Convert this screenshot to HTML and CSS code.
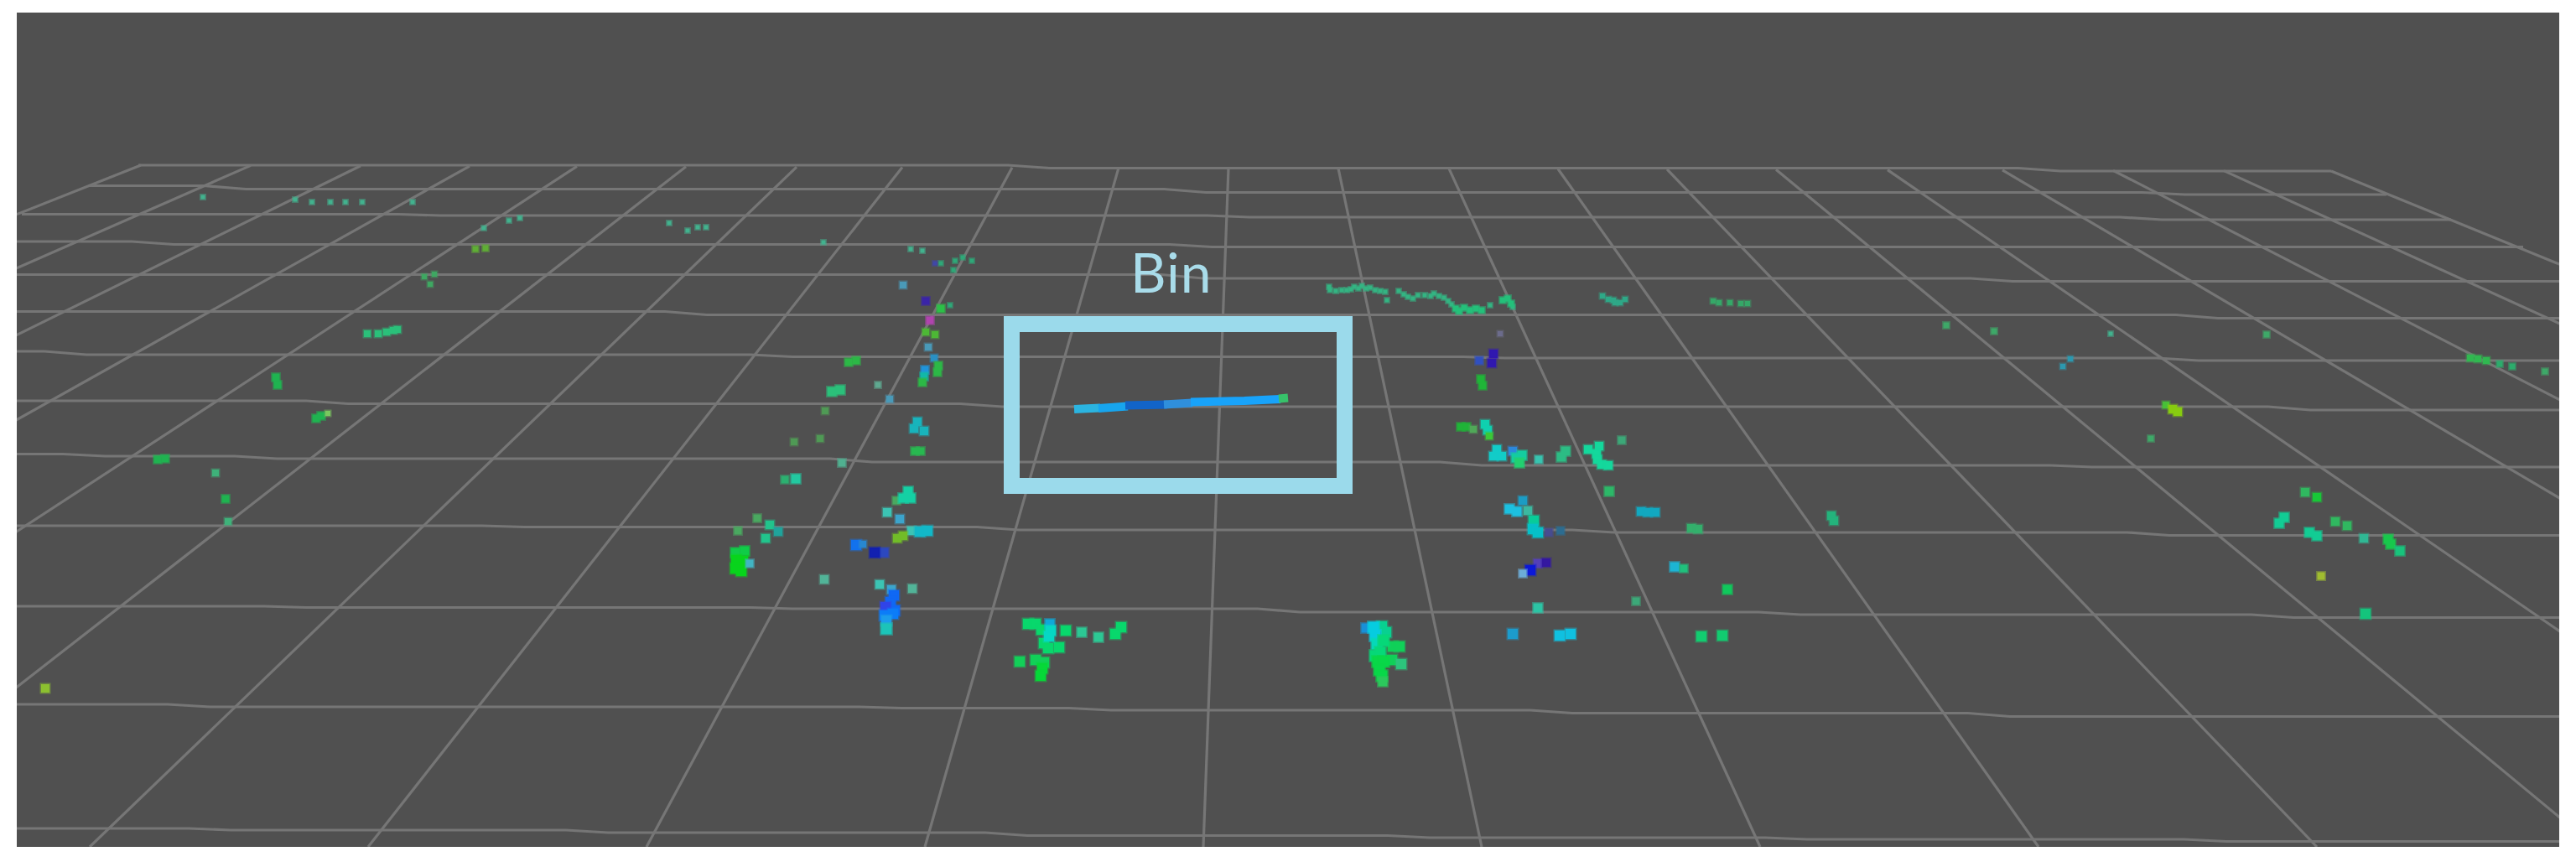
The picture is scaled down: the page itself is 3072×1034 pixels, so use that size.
FILE: index.html
```html
<!DOCTYPE html>
<html lang="en">
<head>
  <meta charset="UTF-8" />
  <meta name="viewport" content="width=device-width, initial-scale=1.0"/>
  <title>Laser Scan View</title>
  <link rel="stylesheet" href="styles.css">
</head>
<body>
  <div class="viewer">
    <svg class="scene" viewBox="20 15 3032 995">
      <g id="grid" class="grid"></g>
      <g id="points" class="points"></g>
      <g class="target">
        <path stroke="#2bb4e0" d="M1281 488 L1312 486.5"/>
        <path stroke="#17a5ee" d="M1310 487 L1345 484.5"/>
        <path stroke="#1264c8" d="M1342 483.5 L1392 482.5"/>
        <path stroke="#2f8fdc" d="M1388 482.5 L1422 480.5"/>
        <path stroke="#18a3fa" d="M1420 479.5 L1484 478 L1527 476"/>
        <path stroke="#37c26a" d="M1525 475.5 L1536 474.5"/>
      </g>
    </svg>
    <div class="label">Bin</div>
    <div class="box"></div>
  </div>
  <script src="script.js"></script>
</body>
</html>
```
FILE: styles.css
```css
* {
  margin: 0;
  padding: 0;
  box-sizing: border-box;
}

body {
  background: #fff;
  padding: 15px 20px 24px;
  font-family: Lato, sans-serif;
  overflow: hidden;
}

.viewer {
  position: relative;
  width: 3032px;
  height: 995px;
  background: #505050;
  overflow: hidden;
}

.scene {
  display: block;
  width: 100%;
  height: 100%;
}

.grid {
  fill: none;
  stroke: #767676;
  stroke-width: 3.2;
}

.points rect {
  stroke-width: 3;
  stroke-opacity: 0.45;
}

.target {
  fill: none;
  stroke-width: 10;
}

/* annotation on top of the scan */
.label {
  position: absolute;
  left: 1328px;
  top: 269px;
  font-size: 66px;
  line-height: 80px;
  letter-spacing: 1px;
  color: #a9dcea;
}

.box {
  position: absolute;
  left: 1177px;
  top: 362px;
  width: 416px;
  height: 212px;
  border: 19px solid #9bdaeb;
}
```
FILE: script.js
```js
const svgNS = "http://www.w3.org/2000/svg";
const grid = document.getElementById("grid");
const points = document.getElementById("points");

// cross lines: start x, then y / end x pairs
const rows = [
  [165, 197, 1227, 200.5, 2432, 204, 2780],
  [105, 221.5, 268, 225.5, 1413, 229.5, 2580, 232, 2846],
  [26, 255.5, 500, 257, 1465, 259, 2553, 262, 2923],
  [20, 288, 182, 291.5, 1420, 294.5, 3009],
  [20, 327.5, 1410, 332, 2375, 335.5, 3052],
  [20, 371.5, 818, 375.5, 2620, 379.5, 3052],
  [20, 419, 78, 423, 920, 425.5, 1770, 427, 2597, 430, 3052],
  [20, 478, 390, 481.5, 1170, 485, 2730, 489, 3052],
  [20, 541.5, 100, 544, 305, 547, 1015, 551, 1742, 555, 2470, 557, 3052],
  [20, 627, 600, 628.5, 1190, 632, 1900, 635, 2562, 638.5, 3052],
  [20, 723, 340, 724.5, 920, 726, 1525, 730, 2122, 733, 2710, 736.5, 3052],
  [20, 840, 225, 843, 1050, 844.5, 1300, 847, 1850, 850.5, 2372, 854.5, 3052],
  [20, 988, 250, 990, 700, 993, 1200, 996.5, 1680, 999, 2130, 1001, 2630, 1003.5, 3052]
];

// far end of the depth lines, left to right
const topX = [168, 299, 430, 560, 688, 818, 950, 1076, 1207, 1334, 1465,
  1596, 1728, 1858, 1988, 2118, 2251, 2388, 2520, 2652, 2780];

function addPath(d) {
  const path = document.createElementNS(svgNS, "path");
  path.setAttribute("d", d);
  grid.appendChild(path);
}

rows.forEach(row => {
  let d = `M${row[0]} ${row[1]}`;
  for (let i = 1; i < row.length; i += 2) {
    const last = row[i + 2] === undefined;
    d += ` L${row[i + 1] - (last ? 0 : 25)} ${row[i]}`;
    if (!last) d += ` L${row[i + 1] + 25} ${row[i + 2]}`;
  }
  addPath(d);
});

topX.forEach((x, i) => {
  const y = 197 + i * 0.35;
  addPath(`M${x} ${y} L${1435 + (i - 10) * 332} 1010`);
});

// [colour, size, x, y, x, y, ...]
const clouds = [
  ["#42b28e", 5, 242, 235, 352, 238, 372, 241, 394, 241, 412, 241, 432, 241, 492, 241,
    577, 272, 607, 263, 620, 260, 798, 266, 820, 275, 832, 271, 842, 271, 982, 289,
    1086, 297, 1100, 299, 2517, 398],
  ["#2fa878", 5, 1122, 314, 1139, 311, 1148, 307, 1159, 311, 1137, 322, 1133, 364],
  ["#5fae35", 7, 567, 297, 579, 296],
  ["#3fa862", 6, 506, 330, 518, 327, 513, 339],
  ["#2bc07a", 8, 438, 398, 451, 398, 461, 396, 469, 394, 474, 393],
  ["#1fb350", 9, 329, 450, 331, 459, 377, 499, 383, 496, 188, 548, 197, 547, 269, 595],
  ["#79c860", 6, 391, 493],
  ["#3fb27a", 8, 257, 564, 272, 622],
  ["#8cc030", 10, 54, 821],

  // left cluster
  ["#4a9ab8", 8, 1077, 340, 1107, 414, 1061, 476],
  ["#3a24a8", 9, 1104, 359],
  ["#4048a8", 5, 1115, 314],
  ["#b044ae", 9, 1109, 382],
  ["#2cc048", 9, 1122, 368],
  ["#4db835", 8, 1104, 396, 1115, 399],
  ["#2a90c4", 8, 1114, 427],
  ["#1f94da", 9, 1103, 441],
  ["#12b8a8", 9, 1102, 449],
  ["#2cb846", 9, 1119, 436, 1118, 444, 1100, 456, 1012, 432, 1021, 430],
  ["#2bc07a", 11, 992, 467, 1002, 465],
  ["#5fa890", 7, 1047, 459],
  ["#4f9a55", 8, 984, 490, 978, 523, 947, 527],
  ["#18b4bc", 10, 1094, 503, 1090, 511, 1102, 514],
  ["#28b850", 9, 1091, 538, 1098, 538],
  ["#50b090", 9, 1004, 552],
  ["#2cb070", 9, 936, 572],
  ["#22c8a0", 11, 949, 571],
  ["#4aa860", 9, 903, 618, 880, 633, 1069, 597],
  ["#22c48c", 10, 918, 626, 913, 642],
  ["#20a49c", 10, 928, 634],
  ["#10cc48", 11, 888, 657, 877, 659],
  ["#08d41c", 12, 878, 668, 886, 669, 877, 678, 884, 681],
  ["#42b4c4", 9, 894, 672],
  ["#14d0a4", 11, 1083, 586, 1077, 594, 1086, 594],
  ["#3cc4b4", 10, 1058, 611, 1087, 633, 1049, 697],
  ["#3ca4cc", 10, 1073, 619, 1063, 703],
  ["#12b8c8", 12, 1097, 634, 1106, 633],
  ["#72bc28", 10, 1070, 642, 1077, 639],
  ["#1272ee", 12, 1021, 650],
  ["#2888d0", 8, 1029, 649],
  ["#2c48c0", 11, 1054, 659],
  ["#1220b0", 12, 1043, 659],
  ["#52b498", 10, 983, 691, 1088, 702],
  ["#1068f4", 12, 1066, 710, 1062, 718, 1067, 728],
  ["#3044e8", 12, 1056, 724],
  ["#0c7cf8", 12, 1055, 734, 1065, 732],
  ["#1c9cec", 12, 1057, 740],
  ["#1cc4b8", 13, 1057, 750],

  // posts in front
  ["#08d86c", 12, 1226, 744, 1235, 744, 1242, 751, 1271, 752, 1337, 748, 1330, 756,
    1245, 767, 1250, 773, 1263, 772],
  ["#2cc894", 11, 1290, 754, 1310, 760],
  ["#10a8d8", 11, 1252, 744],
  ["#06d8c4", 12, 1253, 752, 1251, 759],
  ["#12d058", 12, 1216, 789, 1235, 787, 1245, 790],
  ["#06d838", 12, 1243, 797, 1241, 806],
  ["#1890d8", 11, 1629, 749],
  ["#08d090", 12, 1648, 747, 1653, 754],
  ["#06cce0", 13, 1638, 748, 1640, 758],
  ["#06d8b8", 13, 1642, 768],
  ["#10d058", 12, 1661, 771, 1669, 771, 1660, 787],
  ["#2cc47c", 12, 1671, 792],
  ["#06d878", 13, 1640, 782, 1646, 778, 1650, 764],
  ["#08d848", 13, 1643, 789, 1650, 789, 1645, 799, 1648, 806],
  ["#2cc85c", 11, 1649, 813],

  // wall on the right
  ["#34b482", 5, 1585, 342, 1586, 346, 1593, 347, 1600, 346, 1606, 346, 1611, 345,
    1615, 342, 1620, 344, 1624, 341, 1629, 344, 1634, 343, 1640, 346, 1646, 347,
    1652, 348, 1654, 358, 1668, 347, 1674, 351, 1679, 354, 1685, 356, 1691, 352,
    1699, 352, 1706, 353, 1710, 350, 1716, 353, 1722, 355, 1727, 359, 1731, 363,
    1777, 364, 1804, 366],
  ["#24c07a", 7, 1736, 368, 1740, 371, 1746, 367, 1753, 370, 1760, 368, 1767, 370,
    1792, 358, 1798, 356, 1802, 362],
  ["#2fa888", 6, 1911, 353, 1918, 357, 1924, 358, 1926, 361, 1938, 357, 1932, 361],
  ["#35a868", 6, 2043, 359, 2050, 361, 2063, 361, 2076, 362, 2084, 362],
  ["#6c6c8c", 6, 1789, 398],
  ["#3050c0", 9, 1764, 430],
  ["#3018b0", 10, 1781, 422, 1779, 433],
  ["#20b438", 9, 1766, 452, 1768, 460, 1742, 509, 1749, 509],
  ["#50a858", 8, 1757, 512],
  ["#10d0b0", 10, 1771, 506, 1774, 513],
  ["#3cc838", 8, 1776, 520],
  ["#12ccc8", 10, 1785, 536, 1781, 544, 1791, 544],
  ["#2c88dc", 10, 1804, 538],
  ["#14cca0", 11, 1808, 546, 1815, 543],
  ["#22d070", 11, 1812, 552],
  ["#38c4b0", 9, 1835, 548],
  ["#2cbc84", 11, 1867, 538, 1862, 545],
  ["#14d89c", 10, 1894, 536, 1907, 532, 1904, 541, 1905, 548, 1910, 554, 1918, 555],
  ["#3ca878", 9, 1934, 525, 1951, 717],
  ["#2cb868", 11, 1919, 586],
  ["#1c9cc4", 10, 1816, 597],
  ["#1cc0e0", 11, 1800, 607, 1809, 610],
  ["#3cb8a0", 10, 1822, 609],
  ["#08cc98", 12, 1829, 621],
  ["#06c0c8", 12, 1828, 631, 1834, 635],
  ["#484c90", 9, 1847, 635],
  ["#2c6c90", 9, 1861, 633],
  ["#12a8c0", 10, 1957, 610, 1965, 611, 1974, 611],
  ["#34b06c", 10, 2017, 630, 2025, 631],
  ["#24b47c", 10, 2184, 615, 2187, 621],
  ["#5440b8", 10, 1834, 672],
  ["#3418a0", 10, 1844, 671],
  ["#0c18d8", 12, 1825, 680],
  ["#6cacd8", 9, 1816, 684],
  ["#1cb4d4", 11, 1997, 676],
  ["#20c07c", 9, 2008, 678],
  ["#10c85c", 11, 2060, 703],
  ["#2cc4a4", 11, 1834, 725],
  ["#1c9ccc", 12, 1804, 756],
  ["#10c0e0", 12, 1860, 758, 1873, 756],
  ["#12cc70", 12, 2029, 759, 2054, 758],

  // far right
  ["#3ea868", 7, 2321, 388, 2378, 395, 2703, 399, 2565, 523, 3035, 443],
  ["#2c98b0", 6, 2469, 428, 2460, 437],
  ["#30b850", 8, 2946, 427, 2955, 428, 2965, 430],
  ["#2cac6c", 7, 2981, 434, 2996, 437],
  ["#48c038", 8, 2583, 483],
  ["#88cc10", 10, 2591, 488, 2597, 491],
  ["#30b860", 10, 2749, 587, 2785, 622, 2799, 627],
  ["#18c838", 10, 2763, 593],
  ["#12cc94", 11, 2724, 617, 2718, 624, 2754, 635, 2763, 639],
  ["#30b894", 10, 2819, 642],
  ["#18c84c", 11, 2848, 643, 2851, 649],
  ["#18c47c", 11, 2862, 657],
  ["#a0bc30", 9, 2768, 687],
  ["#14c47c", 12, 2821, 732]
];

clouds.forEach(cloud => {
  const [color, size, ...xy] = cloud;
  for (let i = 0; i < xy.length; i += 2) {
    const rect = document.createElementNS(svgNS, "rect");
    rect.setAttribute("x", xy[i] - size / 2);
    rect.setAttribute("y", xy[i + 1] - size / 2);
    rect.setAttribute("width", size);
    rect.setAttribute("height", size);
    rect.setAttribute("fill", color);
    rect.setAttribute("stroke", color);
    points.appendChild(rect);
  }
});
```
